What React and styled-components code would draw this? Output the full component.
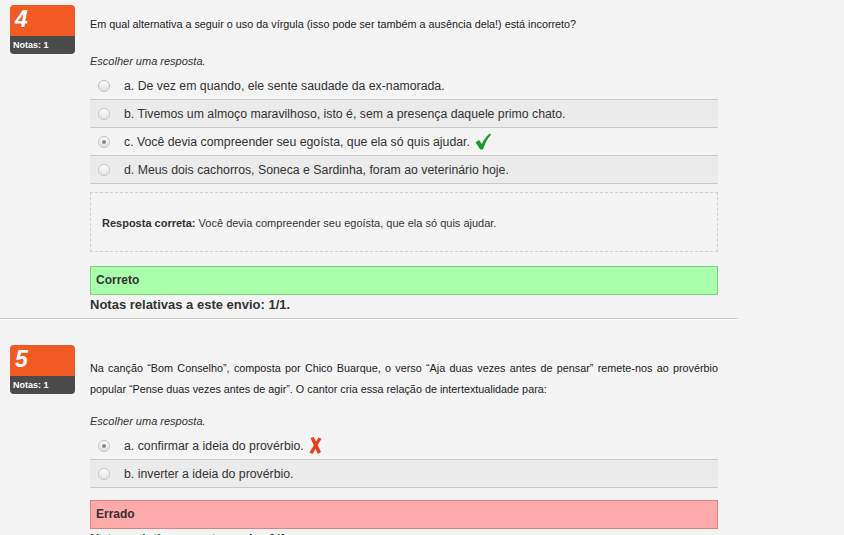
import React from "react";
import styled, { createGlobalStyle } from "styled-components";

const GlobalStyle = createGlobalStyle`
  html, body {
    margin: 0;
    padding: 0;
    background: #f4f4f4;
    font-family: "Liberation Sans", Arial, sans-serif;
    color: #333;
  }
`;

// #region styled-components
const Page = styled.div`
  width: 844px;
  height: 535px;
  overflow: hidden;
  padding-top: 5px;
  box-sizing: border-box;
`;

const Question = styled.div`
  display: flex;
  width: 738px;
  padding-bottom: 3px;
  margin-bottom: 26px;
  border-bottom: ${({ $last }) => ($last ? "none" : "1px solid #cdcdcd")};
  box-shadow: ${({ $last }) => ($last ? "none" : "0 1px 0 #fbfbfb")};
`;

const Badge = styled.div`
  flex: 0 0 65px;
  margin-left: 10px;
  height: 49px;
  border-radius: 4px;
  overflow: hidden;
  display: flex;
  flex-direction: column;
`;

const BadgeNumber = styled.div`
  height: 31px;
  background: #f15a22;
  color: #fff;
  font-weight: bold;
  font-style: italic;
  font-size: 23px;
  line-height: 28px;
  padding-left: 5px;
`;

const BadgeGrade = styled.div`
  flex: 1;
  background: #4a4a4a;
  color: #fff;
  font-size: 9px;
  font-weight: bold;
  line-height: 18px;
  padding-left: 3px;
`;

const Content = styled.div`
  width: 628px;
  margin-left: 15px;
  padding-top: ${({ $pt }) => $pt}px;
`;

const QText = styled.div`
  font-size: 10.8px;
  line-height: 21px;
  color: #222;
  text-align: justify;
`;

const Prompt = styled.div`
  font-size: 11px;
  font-style: italic;
  line-height: 20px;
  color: #333;
  margin-top: ${({ $mt }) => $mt}px;
  margin-bottom: 1px;
`;

const Options = styled.div`
  display: flex;
  flex-direction: column;
`;

const Option = styled.div`
  display: flex;
  align-items: center;
  height: 27px;
  border-bottom: 1px solid #c9c9c9;
  background: ${({ $shade }) => ($shade ? "#ebebeb" : "transparent")};
  padding-left: 8px;
  font-size: 12.3px;
  color: #333;
`;

const Radio = styled.span`
  position: relative;
  width: 10px;
  height: 10px;
  border-radius: 50%;
  border: 1px solid #c4c4c4;
  background: linear-gradient(#fdfdfd, #e2e2e2);
  margin-right: 14px;
  flex: 0 0 auto;

  &::after {
    content: "";
    display: ${({ $checked }) => ($checked ? "block" : "none")};
    position: absolute;
    left: 3px;
    top: 3px;
    width: 4px;
    height: 4px;
    border-radius: 50%;
    background: #8a8a8a;
  }
`;

const Mark = styled.svg`
  margin-left: 5px;
  flex: 0 0 auto;
`;

const AnswerBox = styled.div`
  margin-top: 8px;
  height: 56px;
  border: 1px dashed #cfcfcf;
  display: flex;
  align-items: center;
  padding-left: 11px;
  padding-top: 2px;
  font-size: 11px;
  color: #333;

  b {
    font-weight: bold;
  }
`;

const Outcome = styled.div`
  margin-top: ${({ $mt }) => $mt}px;
  height: 27px;
  line-height: 27px;
  border: 1px solid ${({ $ok }) => ($ok ? "#7fcf7f" : "#d98080")};
  background: ${({ $ok }) => ($ok ? "#aaffaa" : "#ffaaaa")};
  padding-left: 5px;
  font-size: 12px;
  font-weight: bold;
  color: #333;
`;

const Grade = styled.div`
  font-size: 13px;
  font-weight: bold;
  line-height: 20px;
  color: #333;
`;
// #endregion

const Check = () => (
  <Mark width="16" height="17" viewBox="0 0 16 17">
    <path d="M0.5 9.5 L4 7 L6.8 11 C8.8 6.8 11.5 3.2 14.6 0.5 L16 1.8 C12.5 5.5 10 10 8 16.5 L5.3 16.5 Z" fill="#1a9b2a" />
  </Mark>
);

const Cross = () => (
  <Mark width="13" height="17" viewBox="0 0 13 17">
    <path d="M1.5 1 L4.8 0 L12 15 L8.8 17 Z" fill="#e8401e" />
    <path d="M9.5 0.5 L12.5 1.8 L3.5 17 L0.5 15.6 Z" fill="#e8401e" />
  </Mark>
);

const questions = [
  {
    num: 4,
    pt: 9,
    promptGap: 16,
    text: "Em qual alternativa a seguir o uso da vírgula (isso pode ser também a ausência dela!) está incorreto?",
    options: [
      { label: "a. De vez em quando, ele sente saudade da ex-namorada." },
      { label: "b. Tivemos um almoço maravilhoso, isto é, sem a presença daquele primo chato." },
      { label: "c. Você devia compreender seu egoísta, que ela só quis ajudar.", checked: true, mark: "ok" },
      { label: "d. Meus dois cachorros, Soneca e Sardinha, foram ao veterinário hoje." },
    ],
    correct: "Você devia compreender seu egoísta, que ela só quis ajudar.",
    ok: true,
  },
  {
    num: 5,
    pt: 13,
    promptGap: 11,
    text: "Na canção “Bom Conselho”, composta por Chico Buarque, o verso “Aja duas vezes antes de pensar” remete-nos ao provérbio popular “Pense duas vezes antes de agir”. O cantor cria essa relação de intertextualidade para:",
    options: [
      { label: "a. confirmar a ideia do provérbio.", checked: true, mark: "bad" },
      { label: "b. inverter a ideia do provérbio." },
    ],
    ok: false,
  },
];

const App = () => {
  return (
    <Page>
      <GlobalStyle />
      {questions.map((q, qi) => (
        <Question key={q.num} $last={qi === questions.length - 1}>
          <Badge>
            <BadgeNumber>{q.num}</BadgeNumber>
            <BadgeGrade>Notas: 1</BadgeGrade>
          </Badge>
          <Content $pt={q.pt}>
            <QText>{q.text}</QText>
            <Prompt $mt={q.promptGap}>Escolher uma resposta.</Prompt>
            <Options>
              {q.options.map((o, i) => (
                <Option key={i} $shade={i % 2 === 1}>
                  <Radio $checked={o.checked} />
                  {o.label}
                  {o.mark === "ok" && <Check />}
                  {o.mark === "bad" && <Cross />}
                </Option>
              ))}
            </Options>
            {q.correct && (
              <AnswerBox>
                <b>Resposta correta:</b>&nbsp;{q.correct}
              </AnswerBox>
            )}
            <Outcome $ok={q.ok} $mt={q.correct ? 14 : 12}>
              {q.ok ? "Correto" : "Errado"}
            </Outcome>
            <Grade>Notas relativas a este envio: {q.ok ? "1/1." : "0/1."}</Grade>
          </Content>
        </Question>
      ))}
    </Page>
  );
};

export default App;
